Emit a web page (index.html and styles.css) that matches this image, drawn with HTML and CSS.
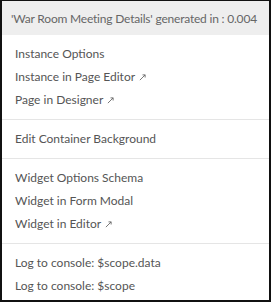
FILE: index.html
```html
<!DOCTYPE html>
<html lang="en">
<head>
    <meta charset="UTF-8">
    <title>Widget context menu</title>
    <link rel="stylesheet" href="styles.css">
</head>
<body>

<div class="context-menu">
    <div class="menu-header">'War Room Meeting Details' generated in : 0.004</div>
    <ul class="menu-list">
        <li><a href="#">Instance Options</a></li>
        <li><a href="#">Instance in Page Editor <svg class="ext" viewBox="0 0 8 8"><path d="M1 7 L7 1 M4 1 H7 V4"/></svg></a></li>
        <li><a href="#">Page in Designer <svg class="ext" viewBox="0 0 8 8"><path d="M1 7 L7 1 M4 1 H7 V4"/></svg></a></li>
        <li class="divider"></li>
        <li><a href="#">Edit Container Background</a></li>
        <li class="divider"></li>
        <li><a href="#">Widget Options Schema</a></li>
        <li><a href="#">Widget in Form Modal</a></li>
        <li><a href="#">Widget in Editor <svg class="ext" viewBox="0 0 8 8"><path d="M1 7 L7 1 M4 1 H7 V4"/></svg></a></li>
        <li class="divider"></li>
        <li><a href="#">Log to console: $scope.data</a></li>
        <li><a href="#">Log to console: $scope</a></li>
    </ul>
</div>

</body>
</html>
```

FILE: styles.css
```css
body {
    margin: 0;
    font-family: 'Lato', 'Open Sans', sans-serif;
    font-size: 12px;
    color: #555;
    background: #fff;
}
.context-menu {
    width: 271px;
    height: 302px;
    box-sizing: border-box;
    border: 1px solid #111;
    border-width: 1px 2px 2px 2px;
    background: #fff;
    overflow: hidden;
}
.menu-header {
    background: #eee;
    color: #666;
    height: 34px;
    line-height: 36px;
    padding: 0 9px;
    white-space: nowrap;
    letter-spacing: -0.2px;
}
.menu-list {
    list-style: none;
    margin: 0;
    padding: 7px 0 0;
}
.menu-list a {
    display: block;
    padding: 0 13px;
    line-height: 23px;
    color: #555;
    text-decoration: none;
    white-space: nowrap;
}
.divider {
    height: 1px;
    background: #e5e5e5;
    margin: 7.5px 0;
}
.ext {
    width: 7px;
    height: 7px;
    margin-left: 1px;
    fill: none;
    stroke: #666;
    stroke-width: 1;
}
```
